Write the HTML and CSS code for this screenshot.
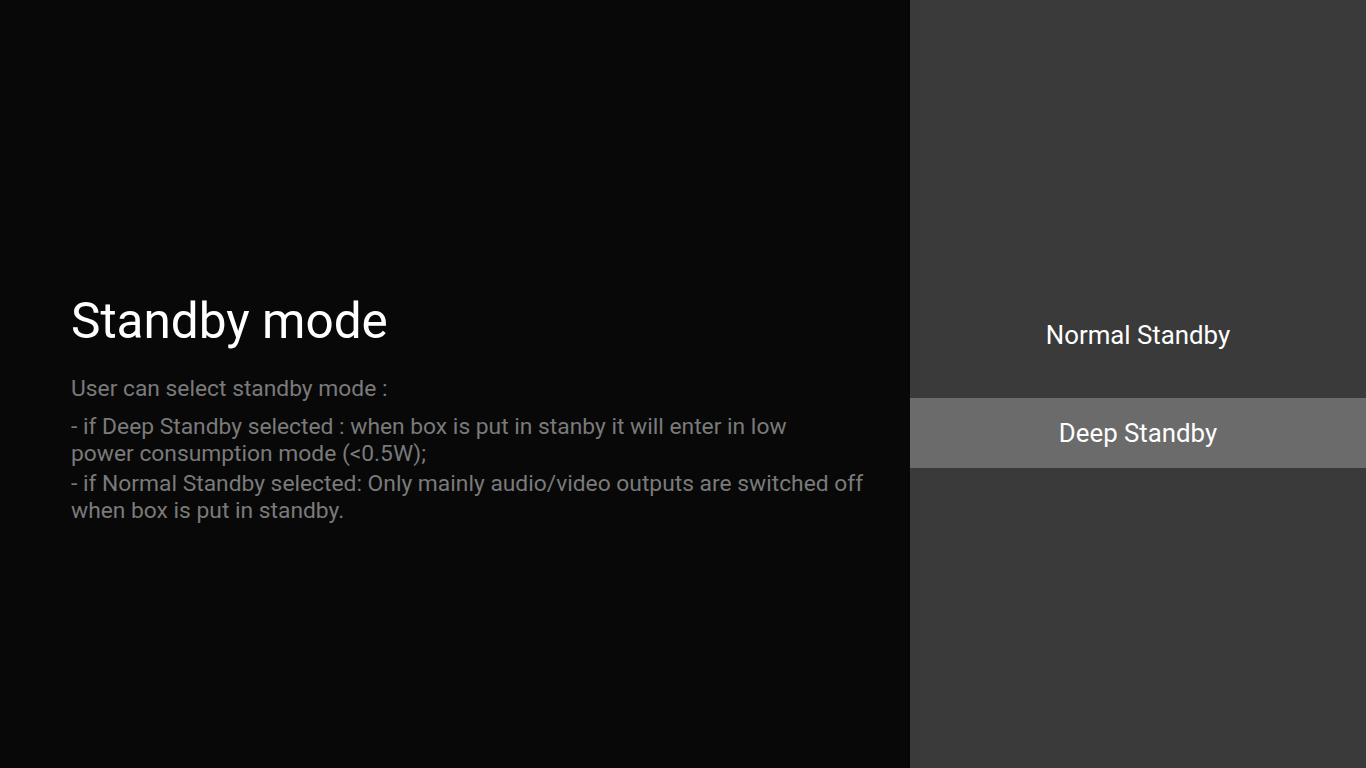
FILE: index.html
```html
<!DOCTYPE html>
<html lang="en">

<head>
    <meta charset="UTF-8">
    <title>Standby mode</title>
    <link rel="stylesheet" href="styles.css">
</head>

<body>
    <div class="screen">
        <!-- Description -->
        <div class="info-area">
            <h1>Standby mode</h1>
            <p class="intro">User can select standby mode :</p>
            <p>- if Deep Standby selected : when box is put in stanby it will enter in low<br>power consumption mode (&lt;0.5W);</p>
            <p>- if Normal Standby selected: Only mainly audio/video outputs are switched off<br>when box is put in standby.</p>
        </div>

        <!-- Options -->
        <div class="options-area">
            <ul>
                <li>Normal Standby</li>
                <li class="selected">Deep Standby</li>
            </ul>
        </div>
    </div>
</body>

</html>
```

FILE: styles.css
```css
body {
    margin: 0;
    font-family: Roboto, 'Noto Sans', sans-serif;
    background-color: #080808;
    color: #f0f0f0;
}

.screen {
    display: flex;
    width: 1366px;
    height: 768px;
    overflow: hidden;
}

.info-area {
    width: 910px;
    box-sizing: border-box;
    padding: 290px 30px 0 71px;
}

.info-area h1 {
    margin: 0 0 23px;
    font-size: 49.5px;
    font-weight: 400;
    color: #ffffff;
    line-height: 62px;
}

.info-area p {
    margin: 0 0 3px;
    font-size: 22.8px;
    line-height: 27px;
    color: #7a7a7a;
}

.info-area p.intro {
    margin-bottom: 11px;
}

.options-area {
    flex: 1;
    background-color: #3a3a3a;
}

.options-area ul {
    list-style: none;
    margin: 0;
    padding: 300px 0 0;
    display: flex;
    flex-direction: column;
    gap: 28px;
}

.options-area li {
    height: 70px;
    display: flex;
    align-items: center;
    justify-content: center;
    font-size: 25.8px;
    color: #ffffff;
}

.options-area li.selected {
    background-color: #6b6b6b;
}
```
